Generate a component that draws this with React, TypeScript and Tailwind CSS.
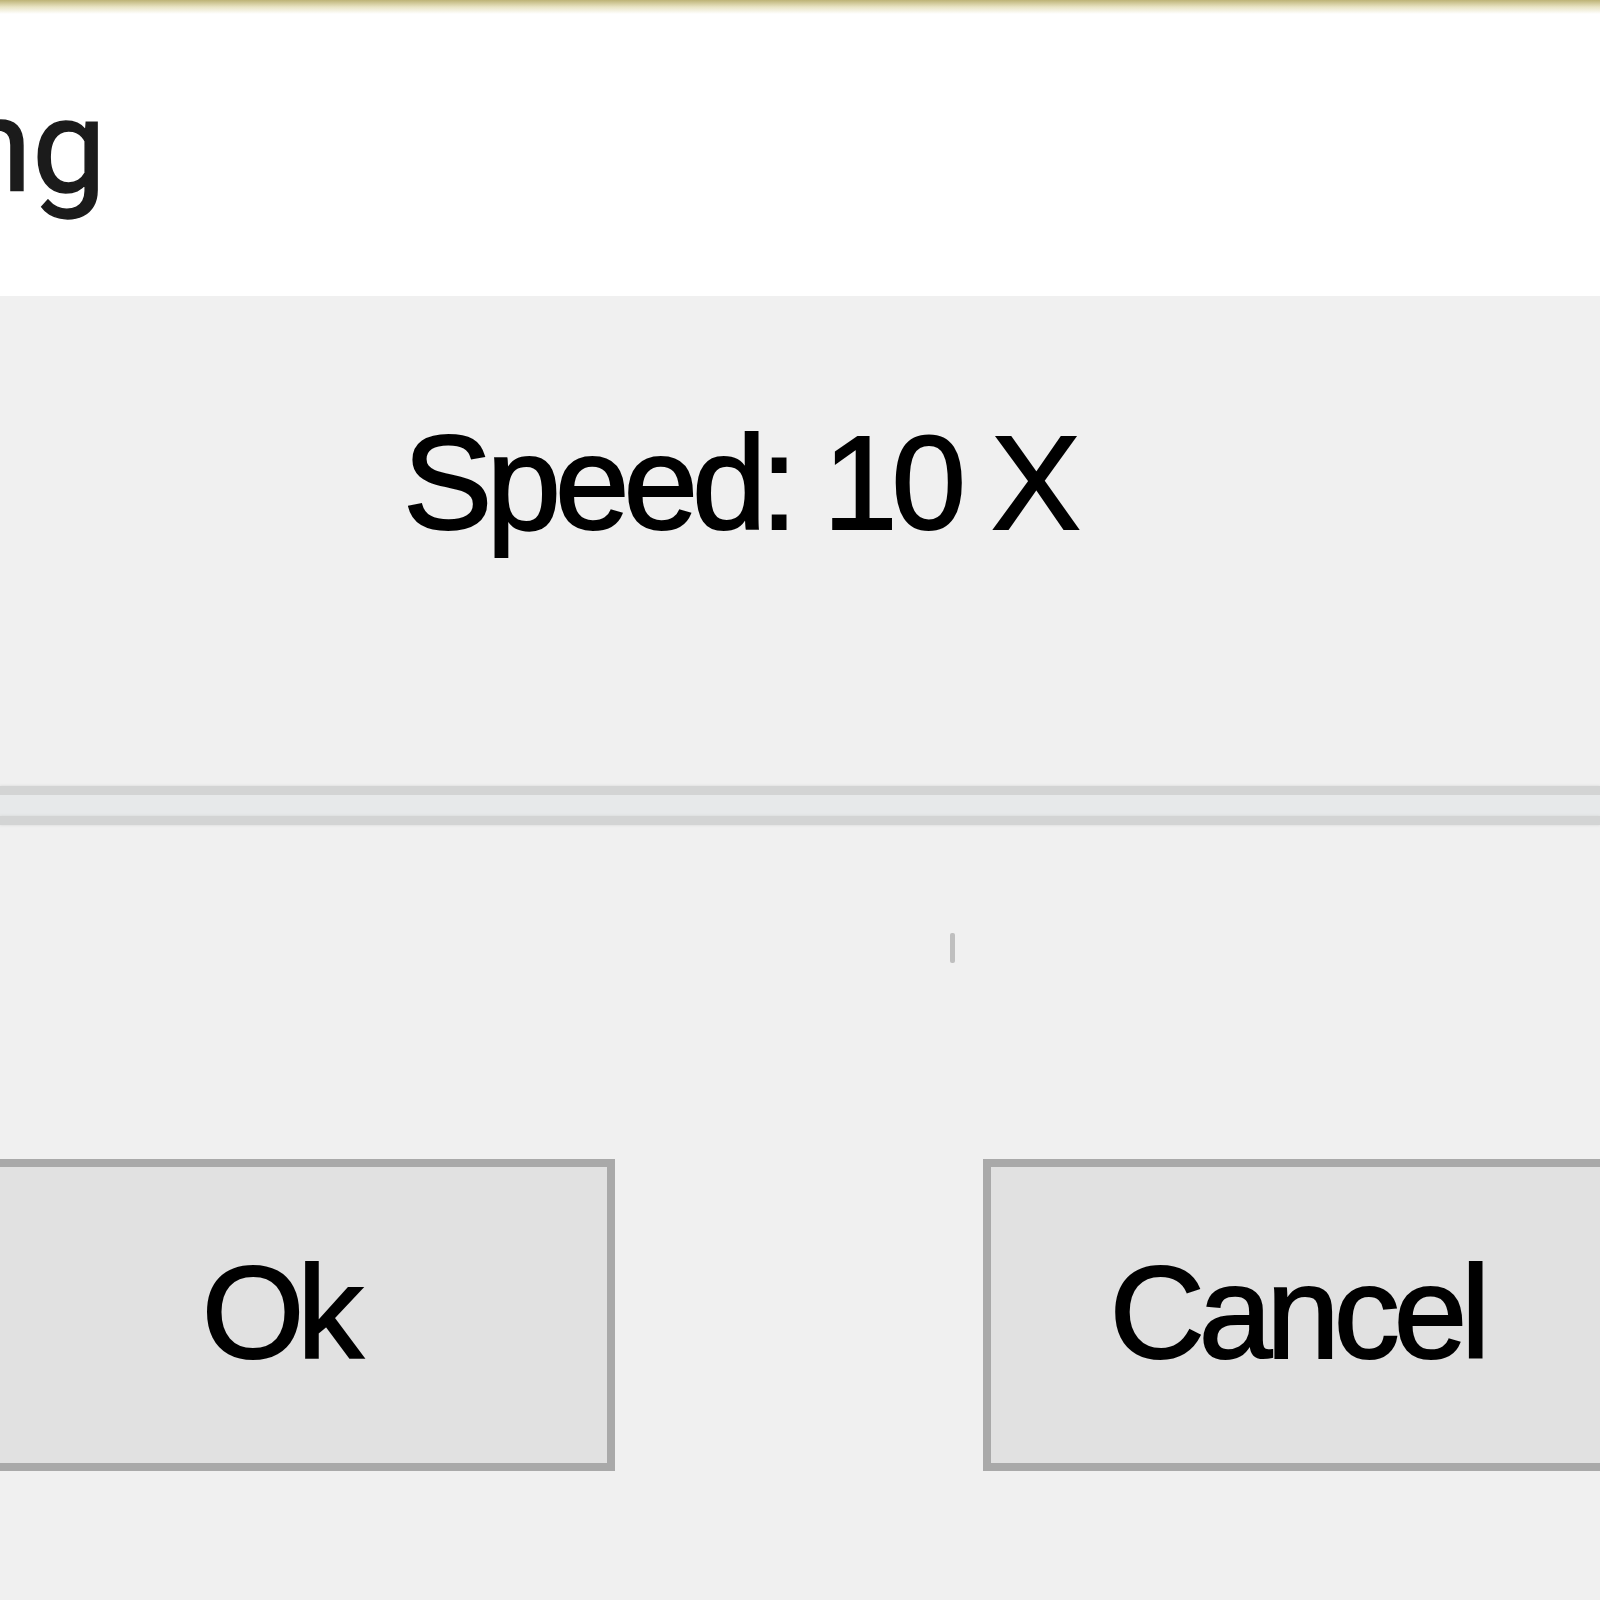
export default function App() {
  return (
    <div className="w-[1600px] h-[1600px] overflow-hidden bg-[#f0f0f0] flex flex-col">
      {/* header strip of the dialog */}
      <div className="h-[296px] bg-white flex flex-col shrink-0">
        <div className="h-[14px] bg-gradient-to-b from-[#bdb376] via-[#e9e4c4] to-white" />
        <div
          className="pt-[66px] ml-[-41px] text-[132px] leading-none text-[#1b1b1b] [-webkit-text-stroke:1.5px_#1b1b1b]"
          style={{ fontFamily: 'Roboto, "Noto Sans", sans-serif' }}
        >
          ng
        </div>
      </div>

      {/* body */}
      <div style={{ fontFamily: '"Liberation Sans", Arial, sans-serif' }} className="flex flex-col">
        <div className="pt-[120px] pl-[403px] text-[134px] leading-none tracking-[-6px] text-black [-webkit-text-stroke:2px_#000]">
          Speed: 10 X
        </div>

        {/* etched separator */}
        <div className="mt-[236px] flex flex-col">
          <div className="h-[9px] bg-[#d3d4d4] shadow-[0_0_3px_#d3d4d4]" />
          <div className="h-[21px] bg-[#e7e9ea]" />
          <div className="h-[9px] bg-[#d3d4d4] shadow-[0_0_3px_#d3d4d4]" />
        </div>

        {/* slider tick */}
        <div className="pt-[108px] pl-[950px]">
          <div className="w-[5px] h-[30px] bg-[#a9a9a9] rounded-[2px] opacity-70" />
        </div>

        {/* buttons */}
        <div className="mt-[196px] flex gap-[368px] ml-[-53px]">
          <button className="w-[668px] h-[312px] shrink-0 border-[8px] border-[#a9a9a9] bg-[#e1e1e1] text-[132px] leading-none tracking-[-7px] text-black [-webkit-text-stroke:2px_#000] flex items-center justify-center pb-[4px] pr-[4px]">
            Ok
          </button>
          <button className="w-[668px] h-[312px] shrink-0 border-[8px] border-[#a9a9a9] bg-[#e1e1e1] text-[132px] leading-none tracking-[-6px] text-black [-webkit-text-stroke:2px_#000] flex items-center justify-center pb-[4px] pr-[40px]">
            Cancel
          </button>
        </div>
      </div>
    </div>
  );
}
